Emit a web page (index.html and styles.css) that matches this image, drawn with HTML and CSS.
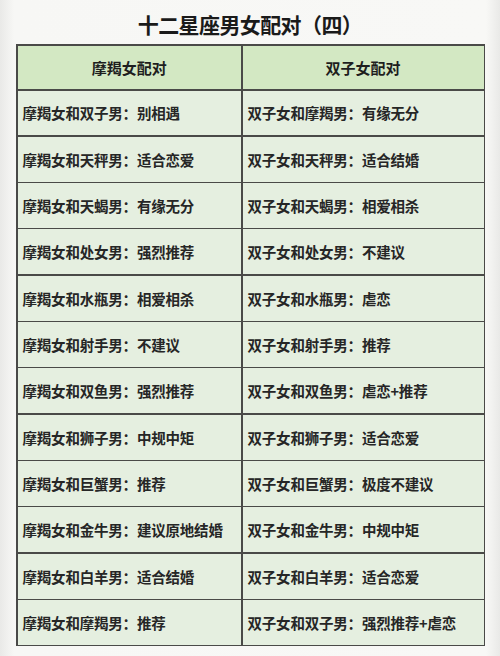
FILE: index.html
```html
<!DOCTYPE html>
<html lang="zh">
<head>
<meta charset="utf-8">
<link rel="stylesheet" href="styles.css">
</head>
<body>
<div class="page">
  <h1 class="title">十二星座男女配对（四）</h1>
  <div class="match">
    <div class="head">摩羯女配对</div><div class="head">双子女配对</div>
    <div class="cell">摩羯女和双子男：别相遇</div><div class="cell">双子女和摩羯男：有缘无分</div>
    <div class="cell">摩羯女和天秤男：适合恋爱</div><div class="cell">双子女和天秤男：适合结婚</div>
    <div class="cell">摩羯女和天蝎男：有缘无分</div><div class="cell">双子女和天蝎男：相爱相杀</div>
    <div class="cell">摩羯女和处女男：强烈推荐</div><div class="cell">双子女和处女男：不建议</div>
    <div class="cell">摩羯女和水瓶男：相爱相杀</div><div class="cell">双子女和水瓶男：虐恋</div>
    <div class="cell">摩羯女和射手男：不建议</div><div class="cell">双子女和射手男：推荐</div>
    <div class="cell">摩羯女和双鱼男：强烈推荐</div><div class="cell">双子女和双鱼男：虐恋+推荐</div>
    <div class="cell">摩羯女和狮子男：中规中矩</div><div class="cell">双子女和狮子男：适合恋爱</div>
    <div class="cell">摩羯女和巨蟹男：推荐</div><div class="cell">双子女和巨蟹男：极度不建议</div>
    <div class="cell">摩羯女和金牛男：建议原地结婚</div><div class="cell">双子女和金牛男：中规中矩</div>
    <div class="cell">摩羯女和白羊男：适合结婚</div><div class="cell">双子女和白羊男：适合恋爱</div>
    <div class="cell">摩羯女和摩羯男：推荐</div><div class="cell">双子女和双子男：强烈推荐+虐恋</div>
  </div>
</div>
</body>
</html>
```

FILE: styles.css
```css
html, body {
  margin: 0;
  padding: 0;
}
body {
  width: 500px;
  height: 656px;
  overflow: hidden;
  background: linear-gradient(90deg, #e9e9e7 0px, #f7f7f5 14px, #f8f8f6 486px, #e9e9e7 500px);
  font-family: "Noto Sans CJK SC", sans-serif;
  color: #1c1c1c;
}
.page {
  padding: 0 0 0 16px;
}
.title {
  margin: 0;
  height: 44px;
  line-height: 48px;
  text-align: center;
  padding-right: 16px;
  font-size: 21px;
  font-weight: 700;
  color: #1a1a1a;
  letter-spacing: -0.6px;
}
.match {
  width: 469px;
  box-sizing: border-box;
  display: grid;
  grid-template-columns: 223.5px 241px;
  grid-template-rows: 43.5px repeat(12, 44.83px);
  gap: 1.5px;
  padding: 1.5px;
  background: #4a4a48;
}
.head {
  background: #d3e8c3;
  display: flex;
  align-items: center;
  justify-content: center;
  font-size: 15px;
  font-weight: 700;
  color: #1e1e1e;
}
.cell {
  background: #e5efe0;
  display: flex;
  align-items: center;
  padding-left: 5px;
  font-size: 14.5px;
  font-weight: 700;
  color: #262626;
  white-space: nowrap;
  letter-spacing: -0.2px;
}
```
